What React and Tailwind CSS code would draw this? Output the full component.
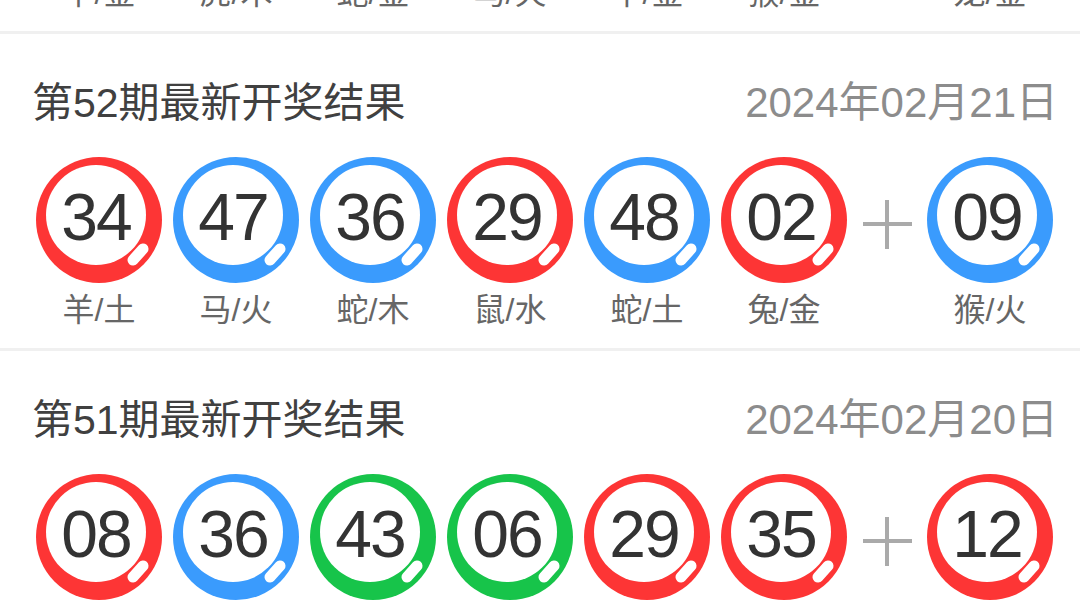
const RED = 'bg-[#fd3535]'
const BLUE = 'bg-[#3a9bfd]'
const GREEN = 'bg-[#17c44a]'

const draws = [
  {
    issue: 53,
    date: '2024年02月22日',
    balls: [
      ['33', RED, '羊/金'],
      ['39', BLUE, '虎/木'],
      ['24', RED, '蛇/金'],
      ['11', GREEN, '马/火'],
      ['19', RED, '牛/金'],
      ['41', BLUE, '猴/金'],
    ],
    special: ['07', RED, '龙/金'],
  },
  {
    issue: 52,
    date: '2024年02月21日',
    balls: [
      ['34', RED, '羊/土'],
      ['47', BLUE, '马/火'],
      ['36', BLUE, '蛇/木'],
      ['29', RED, '鼠/水'],
      ['48', BLUE, '蛇/土'],
      ['02', RED, '兔/金'],
    ],
    special: ['09', BLUE, '猴/火'],
  },
  {
    issue: 51,
    date: '2024年02月20日',
    balls: [
      ['08', RED, '狗/水'],
      ['36', BLUE, '蛇/木'],
      ['43', GREEN, '猪/火'],
      ['06', GREEN, '龙/木'],
      ['29', RED, '鼠/水'],
      ['35', RED, '龙/土'],
    ],
    special: ['12', RED, '牛/木'],
  },
]

function Ball({ number, color, label }) {
  return <div className="flex w-[126px] flex-col items-center">
    <div className={`relative h-[126px] w-[126px] rounded-full ${color}`}>
      <div className="absolute left-[10px] top-[8px] flex h-[100px] w-[100px] items-center justify-center rounded-full bg-white">
        <span className="mt-[3px] font-['Liberation_Sans',sans-serif] text-[66px] leading-none tracking-[-2px] text-[#333]">{number}</span>
      </div>
      <span className="absolute left-[89px] top-[92px] h-[11px] w-[26px] -rotate-[48deg] rounded-full bg-white" />
    </div>
    <div className="mt-[7px] h-[40px] text-[32px] leading-[40px] text-[#666]">{label}</div>
  </div>
}

function Draw({ draw, className = '' }) {
  return <section className={`h-[317px] border-b-[3px] border-[#f0f0f0] pl-[32px] pr-[22px] pt-[45px] ${className}`}>
    <div className="flex h-[48px] items-center justify-between leading-[48px]">
      <span className="text-[41px] text-[#404040]">第{draw.issue}期最新开奖结果</span>
      <span className="text-[42px] text-[#8c8c8c]">{draw.date}</span>
    </div>
    <div className="ml-[4px] mt-[30px] flex gap-[11px]">
      {draw.balls.map(([number, color, label], index) => <Ball key={index} number={number} color={color} label={label} />)}
      <div className="flex h-[126px] w-[58px] items-center justify-center">
        <div className="relative h-[49px] w-[49px] translate-y-[4px]">
          <span className="absolute left-0 top-[22px] h-[4px] w-[49px] bg-[#aaa]" />
          <span className="absolute left-[22px] top-0 h-[49px] w-[4px] bg-[#aaa]" />
        </div>
      </div>
      <Ball number={draw.special[0]} color={draw.special[1]} label={draw.special[2]} />
    </div>
  </section>
}

export default function App() {
  return <div className="h-[607px] w-[1080px] overflow-hidden bg-white font-['Liberation_Sans','Noto_Sans_CJK_SC',sans-serif]">
    <Draw draw={draws[0]} className="-mt-[283px]" />
    <Draw draw={draws[1]} />
    <Draw draw={draws[2]} />
  </div>
}
